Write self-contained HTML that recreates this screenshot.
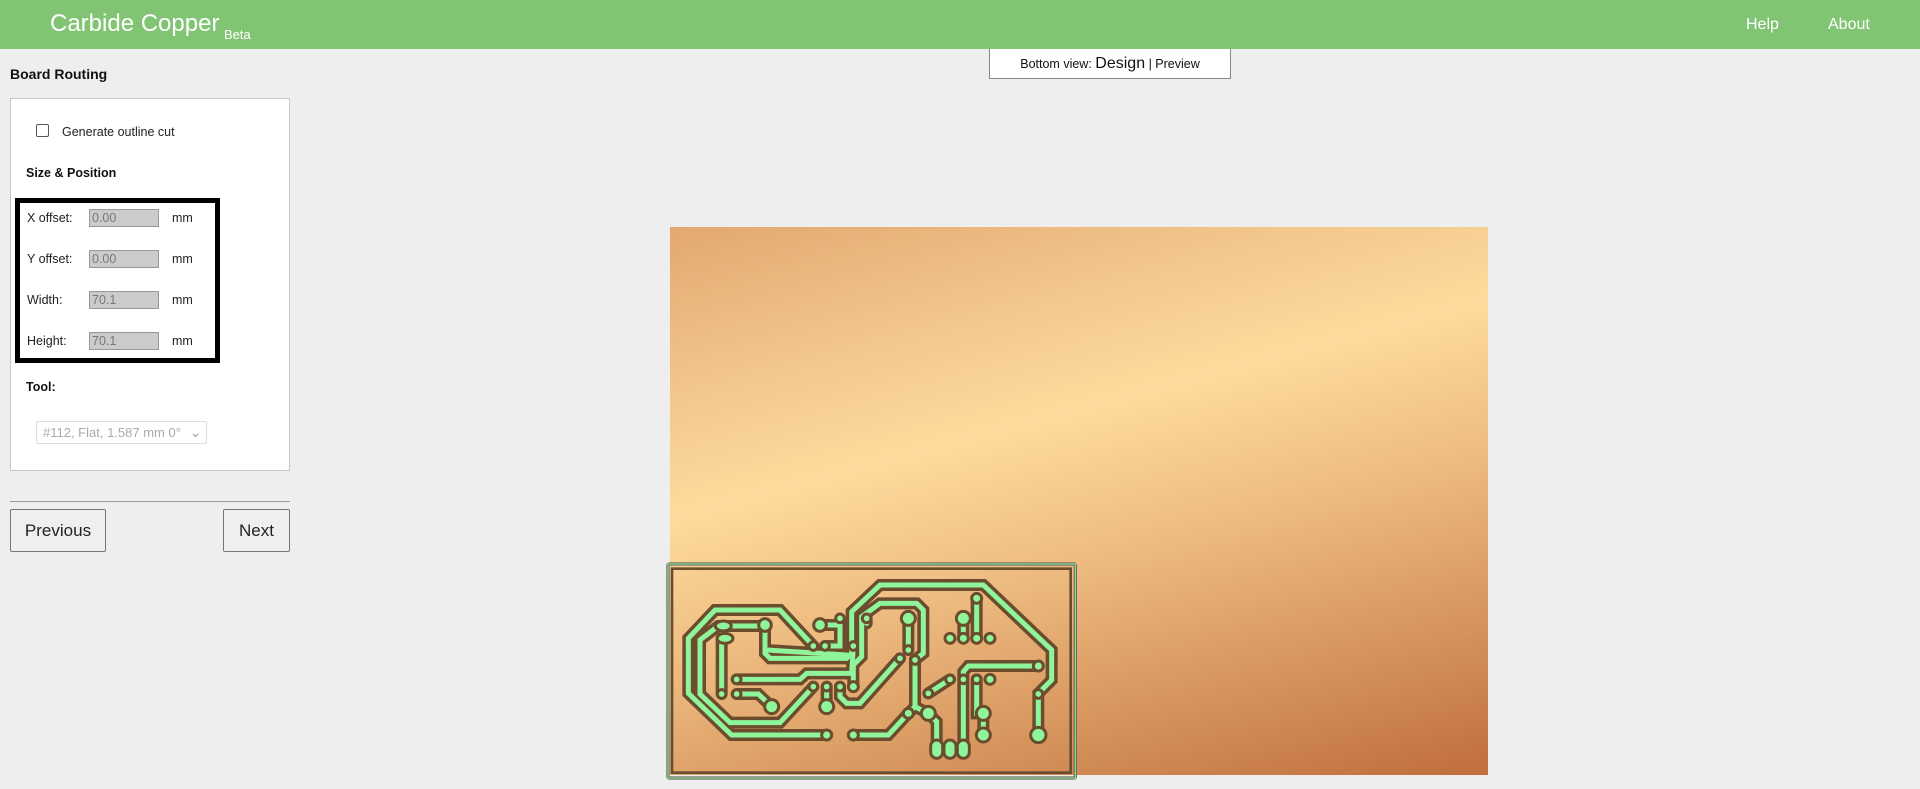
<!DOCTYPE html>
<html><head><meta charset="utf-8"><style>
*{box-sizing:border-box;margin:0;padding:0}
body{width:1920px;height:789px;overflow:hidden;background:#eeeeee;font-family:"Liberation Sans",sans-serif;position:relative;color:#111}
.hdr{position:absolute;left:0;top:0;width:1920px;height:49px;background:#81c574;color:#fff}
.abs{position:absolute;white-space:nowrap}
.panel{position:absolute;left:10px;top:98px;width:280px;height:373px;background:#fff;border:1px solid #c8c8c8}
.blk{position:absolute;left:15px;top:198px;width:205px;height:165px;border:5px solid #000}
.lbl{font-size:12.5px;color:#222}
.inp{position:absolute;left:89px;width:70px;height:18px;background:#cbcbcb;border:1px solid #999;font-size:12.5px;color:#777;padding-left:2px;line-height:16px}
.btn{position:absolute;top:509px;height:43px;border:1px solid #777;border-radius:2px;background:#efefef;font-size:17px;text-align:center;line-height:41px;color:#222}
</style></head><body>
<div class="hdr">
 <div class="abs" style="left:50px;top:10px;font-size:24px;font-weight:300">Carbide <span style="font-weight:400">Copper</span></div>
 <div class="abs" style="left:224px;top:27px;font-size:13px">Beta</div>
 <div class="abs" style="left:1746px;top:16px;font-size:16px">Help</div>
 <div class="abs" style="left:1828px;top:16px;font-size:16px">About</div>
</div>
<div class="abs" style="left:989px;top:49px;width:242px;height:30px;background:#fff;border:1px solid #888;border-top:none;text-align:center;font-size:12.5px;line-height:30px">Bottom view: <span style="font-size:16px">Design</span> | Preview</div>

<div class="abs" style="left:10px;top:66px;font-size:14px;font-weight:bold">Board Routing</div>
<div class="panel"></div>
<div class="abs" style="left:36px;top:124px;width:13px;height:13px;border:1px solid #555;border-radius:2px;background:#fff"></div>
<div class="abs lbl" style="left:62px;top:125px">Generate outline cut</div>
<div class="abs" style="left:26px;top:166px;font-size:12.5px;font-weight:bold">Size &amp; Position</div>
<div class="blk"></div>
<div class="abs lbl" style="left:27px;top:211px">X offset:</div><div class="inp" style="top:209px">0.00</div><div class="abs lbl" style="left:172px;top:211px">mm</div>
<div class="abs lbl" style="left:27px;top:252px">Y offset:</div><div class="inp" style="top:250px">0.00</div><div class="abs lbl" style="left:172px;top:252px">mm</div>
<div class="abs lbl" style="left:27px;top:293px">Width:</div><div class="inp" style="top:291px">70.1</div><div class="abs lbl" style="left:172px;top:293px">mm</div>
<div class="abs lbl" style="left:27px;top:334px">Height:</div><div class="inp" style="top:332px">70.1</div><div class="abs lbl" style="left:172px;top:334px">mm</div>
<div class="abs" style="left:26px;top:380px;font-size:12.5px;font-weight:bold">Tool:</div>
<div class="abs" style="left:36px;top:421px;width:171px;height:23px;border:1px solid #ddd;border-radius:2px;font-size:13px;color:#aaa;line-height:21px;padding-left:6px">#112, Flat, 1.587 mm 0°<span style="position:absolute;right:5px;top:0;color:#999">&#8964;</span></div>
<div class="abs" style="left:10px;top:501px;width:280px;height:1px;background:#999"></div>
<div class="btn" style="left:10px;width:96px">Previous</div>
<div class="btn" style="left:223px;width:67px">Next</div>

<div class="abs" style="left:670px;top:227px;width:818px;height:548px;background:linear-gradient(165deg,#e2a870 0%,#f2c78c 22%,#fedb9c 38%,#edbb80 58%,#d8975f 78%,#c06e3b 100%)"></div>

<svg class="abs" style="left:660px;top:540px" width="420" height="249" viewBox="0 0 1260 747">
<rect x="24" y="72" width="1222" height="642" fill="none" stroke="#6d6a60" stroke-width="10" rx="4"/>
<rect x="24" y="72" width="1222" height="642" fill="none" stroke="#8ef59a" stroke-width="3"/>
<rect x="36" y="86" width="1196" height="612" fill="none" stroke="#6b4d2e" stroke-width="8"/>
<defs>
<g id="t">
<path d="M500,585 H215 L85,460 V295 L165,210 H360 L460,318"/>
<path d="M460,440 L360,548 H210 L120,462 V300 L175,258 H315"/>
<path d="M315,255 V340 L330,355 H560 L575,340 V215 L660,135 H970 L1175,330 V420 L1135,460 V585"/>
<path d="M320,330 L560,345"/>
<path d="M480,255 H540 V318 H495"/>
<path d="M230,418 H420 L440,400 H575 L580,320"/>
<path d="M580,440 V375 L605,350 V230 L660,190 H770 L790,210 V340 L765,360 V500 L805,520"/>
<path d="M230,462 H295 L335,500"/>
<path d="M185,295 V462"/>
<path d="M500,440 V500"/>
<path d="M540,440 V470 L560,490 H600 L720,355"/>
<path d="M745,235 V330"/>
<path d="M580,585 H685 L745,520 L765,500"/>
<path d="M910,235 V295 M950,175 V295"/>
<path d="M805,460 L870,418"/>
<path d="M1135,378 H925 L910,395 V625"/>
<path d="M950,418 V520 L970,520 V585"/>
<path d="M805,520 L830,545 V625"/>
<path d="M620,235 V250"/>
</g>
</defs>
<g fill="none" stroke="#6b4d2e" stroke-width="36" stroke-linecap="round"><use href="#t"/></g>
<g fill="none" stroke="#8ef59a" stroke-width="15" stroke-linecap="round"><use href="#t"/></g>
<g fill="#8ef59a" stroke="#6b4d2e" stroke-width="9">
<circle cx="315" cy="255" r="19"/><circle cx="480" cy="255" r="19"/><circle cx="540" cy="235" r="13"/>
<ellipse cx="190" cy="258" rx="24" ry="15"/><ellipse cx="195" cy="295" rx="24" ry="15"/>
<circle cx="460" cy="318" r="13"/><circle cx="495" cy="318" r="13"/><circle cx="580" cy="318" r="13"/>
<circle cx="230" cy="418" r="13"/><circle cx="230" cy="462" r="13"/><circle cx="185" cy="462" r="13"/>
<circle cx="335" cy="500" r="21"/><circle cx="500" cy="500" r="21"/><circle cx="460" cy="440" r="13"/>
<circle cx="500" cy="440" r="13"/><circle cx="540" cy="440" r="13"/><circle cx="580" cy="440" r="15"/>
<circle cx="745" cy="235" r="21"/><circle cx="745" cy="330" r="13"/><circle cx="620" cy="235" r="13"/>
<circle cx="720" cy="355" r="13"/><circle cx="765" cy="360" r="13"/><circle cx="745" cy="520" r="15"/>
<circle cx="805" cy="520" r="21"/><circle cx="805" cy="460" r="13"/><circle cx="870" cy="418" r="13"/>
<circle cx="910" cy="235" r="21"/><circle cx="950" cy="175" r="15"/>
<circle cx="870" cy="295" r="15"/><circle cx="910" cy="295" r="15"/><circle cx="950" cy="295" r="15"/><circle cx="990" cy="295" r="15"/>
<circle cx="1135" cy="378" r="15"/><circle cx="1135" cy="462" r="13"/><circle cx="1135" cy="585" r="23"/>
<circle cx="910" cy="418" r="13"/><circle cx="950" cy="418" r="13"/><circle cx="990" cy="418" r="15"/>
<circle cx="970" cy="520" r="21"/><circle cx="970" cy="585" r="21"/>
<circle cx="500" cy="585" r="15"/><circle cx="580" cy="585" r="15"/>
<rect x="812" y="600" width="36" height="55" rx="18"/><rect x="852" y="600" width="36" height="55" rx="18"/><rect x="892" y="600" width="36" height="55" rx="18"/>
</g>
</svg>
</body></html>
